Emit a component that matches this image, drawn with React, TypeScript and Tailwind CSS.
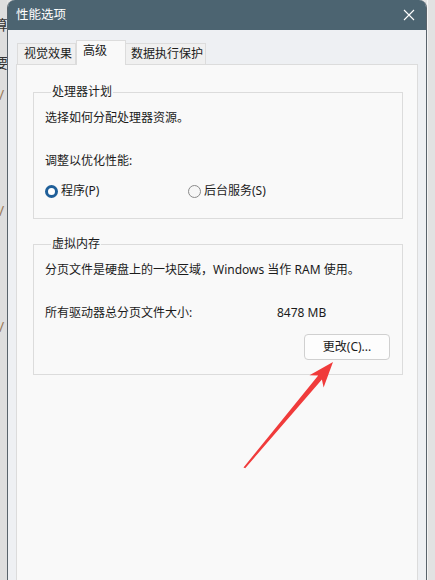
// Performance options dialog - "Advanced" tab

import React from 'react';

// ============================================================================
// Small pieces
// ============================================================================

const Radio: React.FC<{ checked?: boolean; label: string }> = ({ checked, label }) => (
  <div className="flex items-center gap-[3px]">
    {checked ? (
      <span className="h-[13px] w-[13px] rounded-full border-[3.5px] border-[#1f5f99] bg-white" />
    ) : (
      <span className="h-[13px] w-[13px] rounded-full border border-[#8a8a8a] bg-[#f6f6f6]" />
    )}
    <span>{label}</span>
  </div>
);

const GroupBox: React.FC<{ title: string; className?: string; children: React.ReactNode }> = ({
  title,
  className,
  children,
}) => (
  <fieldset className={`ml-[16px] mr-[14px] border border-[#dcdcdc] px-[11px] ${className ?? ''}`}>
    <legend className="ml-[6px] px-[1px] leading-[16px]">{title}</legend>
    {children}
  </fieldset>
);

// ============================================================================
// Page
// ============================================================================

const App: React.FC = () => {
  return (
    <div className="relative flex h-[580px] w-[435px] overflow-hidden bg-[#e4e4e4] font-['Noto_Sans','Noto_Sans_CJK_SC',sans-serif] text-[12px] leading-[16px] text-[#1b1b1b]">
      {/* Desktop behind the dialog */}
      <div className="flex w-[7px] flex-col overflow-hidden bg-[#dedede] text-[14px] text-[#333]">
        <span className="-ml-[6px] mt-[17px]">算</span>
        <span className="-ml-[6px] mt-[22px]">要</span>
        <span className="-ml-[1px] mt-[16px] text-[#9a7a5a]">/</span>
        <span className="-ml-[1px] mt-[100px] text-[#9a7a5a]">/</span>
        <span className="-ml-[1px] mt-[100px] text-[#9a7a5a]">/</span>
      </div>

      {/* Dialog window */}
      <div className="flex w-[420px] flex-col rounded-t-[8px] border-x border-[#59636b] bg-[#eef0f3]">
        {/* Title bar */}
        <div className="flex h-[30px] items-center justify-between rounded-t-[7px] bg-[#4c6471] pl-[8px] pr-[9px] text-white">
          <span className="text-[12.5px]">性能选项</span>
          <svg width="12" height="12" viewBox="0 0 12 12" className="mr-[2px]">
            <path d="M1 1L11 11M11 1L1 11" stroke="#ffffff" strokeWidth="1.1" />
          </svg>
        </div>

        {/* Body */}
        <div className="flex flex-1 flex-col px-[8px] pt-[10px]">
          {/* Tabs */}
          <div className="flex items-end pl-[1px]">
            <div className="flex h-[21px] w-[59px] items-center border border-b-0 border-[#dcdcdc] bg-[#f0f0f0] pl-[6px]">
              视觉效果
            </div>
            <div className="relative z-10 -mb-px flex h-[25px] w-[50px] items-start border border-b-0 border-[#dcdcdc] bg-[#f9f9f9] pl-[6px] pt-[2px]">
              高级
            </div>
            <div className="flex h-[21px] w-[80px] items-center border border-b-0 border-l-0 border-[#dcdcdc] bg-[#f0f0f0] pl-[5px]">
              数据执行保护
            </div>
          </div>

          {/* Tab panel */}
          <div className="flex flex-1 flex-col border border-b-0 border-[#dcdcdc] bg-[#f9f9f9]">
            <GroupBox title="处理器计划" className="mt-[19px] pb-[19px] pt-[10px]">
              <p>选择如何分配处理器资源。</p>
              <p className="mt-[27px]">调整以优化性能:</p>
              <div className="mt-[14px] flex">
                <div className="w-[143px]">
                  <Radio checked label="程序(P)" />
                </div>
                <Radio label="后台服务(S)" />
              </div>
            </GroupBox>

            <GroupBox title="虚拟内存" className="mt-[17px] pb-[14px] pt-[10px]">
              <p>分页文件是硬盘上的一块区域，Windows 当作 RAM 使用。</p>
              <div className="mt-[27px] flex">
                <span className="w-[232px]">所有驱动器总分页文件大小:</span>
                <span>8478 MB</span>
              </div>
              <div className="mt-[13px] flex justify-end pr-[1px]">
                <button className="h-[26px] w-[86px] rounded-[4px] border border-[#d0d0d0] bg-[#fdfdfd] text-[12px]">
                  更改(C)...
                </button>
              </div>
            </GroupBox>
          </div>
        </div>
      </div>

      {/* Desktop on the right */}
      <div className="flex-1 border-l border-[#f4f4f4] bg-[#e2e2e2]" />

      {/* Red annotation arrow */}
      <svg className="pointer-events-none absolute left-0 top-0" width="435" height="580" viewBox="0 0 435 580">
        <polygon
          points="243.5,467.5 318.2,375.6 309.5,375.2 333,362 323.6,387.6 321.9,379.4 245.2,468.2"
          fill="#f03b3b"
        />
      </svg>
    </div>
  );
};

export default App;
